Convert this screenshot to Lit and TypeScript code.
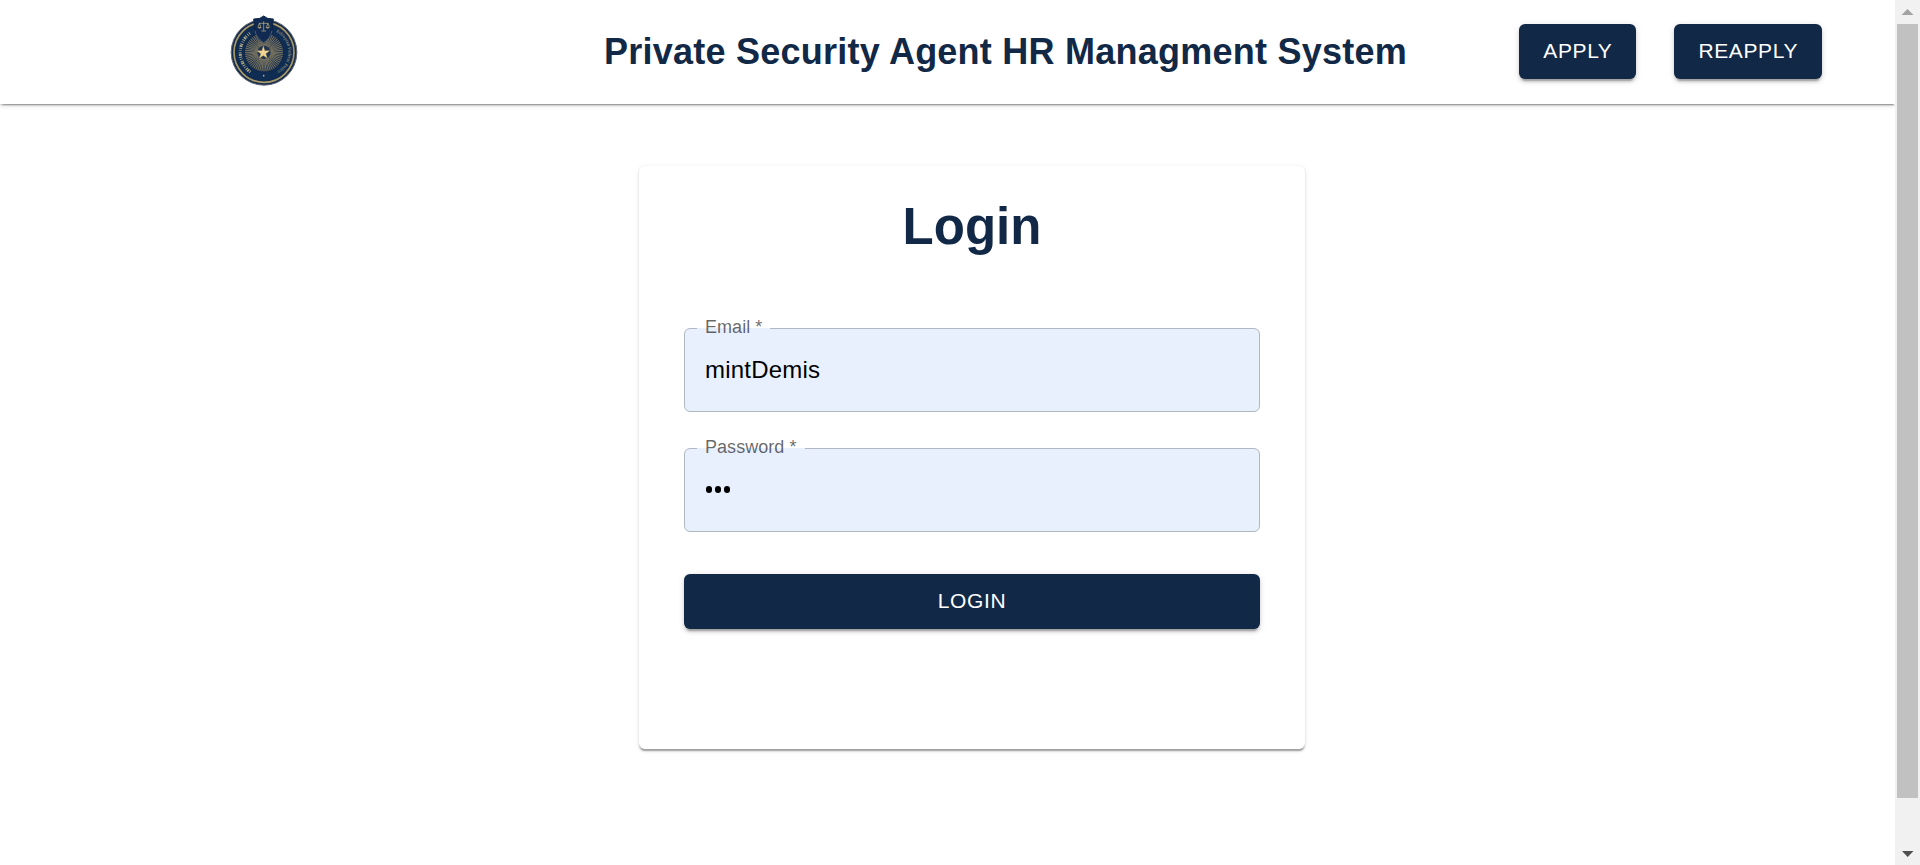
import { LitElement, html, css, svg } from "lit";
import { customElement, property } from "lit/decorators.js";

@customElement("police-crest")
class PoliceCrest extends LitElement {
  static styles = css`
    :host { display: block; width: 70px; height: 72px; }
    svg { display: block; width: 70px; height: 72px; }
    text { font-family: "Liberation Serif", serif; font-size: 14px; fill: #b9ad85; letter-spacing: 0.2px; }
  `;

  private rays() {
    return Array.from({ length: 56 }, (_, i) => {
      const a = (i / 56) * Math.PI * 2;
      const at = (r: number) => `${132 + Math.cos(a) * r} ${127 + Math.sin(a) * r}`;
      return svg`<path d="M${at(20)}L${at(57)}" stroke="#8f8462" stroke-width="2.4"/>`;
    });
  }

  render() {
    return html`<svg viewBox="30 15 210 216" fill="none">
      <circle cx="132" cy="127" r="98.5" fill="#152b4b" stroke="#5f6575" stroke-width="3"/>
      <circle cx="132" cy="127" r="90" stroke="#a89a6b" stroke-width="5"/>
      <circle cx="132" cy="127" r="84" fill="#0f2c52"/>
      <circle cx="132" cy="127" r="59" fill="#203450" stroke="#142743" stroke-width="3"/>
      ${this.rays()}
      <path d="M91 186A72 72 0 0 1 92 68" stroke="#b9ad85" stroke-width="9" stroke-dasharray="2.5 3 5 2 3 5 2 4"/>
      <path id="arc" d="M168 66A67 67 0 0 1 158 190"/>
      <text><textPath href="#arc" textLength="145">Ethiopian Federal Police</textPath></text>
      <circle cx="131" cy="197" r="2.5" fill="#c2b27d"/>
      <path d="M101 27Q121 28 131 18Q141 28 160 27L156 62Q152 84 131 98Q109 84 105 62Z" fill="#102a52" stroke="#0d2345" stroke-width="3"/>
      <path d="M105 62Q109 84 131 98Q152 84 156 62" stroke="#8791a3" stroke-width="1.5"/>
      <path d="M131 34V62M124 63H138M117 40H145M118 40L114 52M118 40L123 52M144 40L139 52M144 40L148 52" stroke="#c9b87d" stroke-width="2"/>
      <path d="M113 52H125Q119 59 113 52ZM137 52H149Q143 59 137 52Z" fill="#c9b87d"/>
      <path d="M130 108L134.500 122L149 122L137.500 131L142 145L130 136.500L118 145L122.500 131L111 122L125.500 122Z" fill="#efd391" stroke="#b59b62" stroke-width="1"/>
    </svg>`;
  }
}

@customElement("outlined-field")
class OutlinedField extends LitElement {
  @property() label = "";
  @property() value = "";
  @property() type = "text";

  static styles = css`
    :host { display: block; height: 84px; position: relative; }
    .well {
      box-sizing: border-box; height: 84px; padding: 0 21px; border-radius: 6px;
      background: #e8f0fe; display: flex; align-items: center;
      font-size: 24px; line-height: 34px; letter-spacing: 0.2px; color: #000;
    }
    .dots { display: flex; gap: 2.6px; padding: 0 0 1px 1px; }
    .dot { width: 6.2px; height: 6.2px; border-radius: 50%; background: #000; }
    .outline {
      position: absolute; inset: -8px 0 0 0; margin: 0; padding: 0 12px; min-width: 0;
      border: 1px solid rgba(0, 0, 0, 0.23); border-radius: 6px;
    }
    .notch { padding: 0; height: 17px; font-size: 18px; line-height: 17px; visibility: hidden; }
    .notch-text { padding: 0 8px; letter-spacing: 0.05px; }
    .label {
      position: absolute; left: 21px; top: -13px;
      font-size: 18px; line-height: 24px; letter-spacing: 0.05px; color: rgba(0, 0, 0, 0.6);
    }
  `;

  render() {
    return html`
      <div class="well">${this.type === "password"
        ? html`<span class="dots">${[...this.value].map(() => html`<span class="dot"></span>`)}</span>`
        : this.value}</div>
      <fieldset class="outline"><legend class="notch"><span class="notch-text">${this.label} *</span></legend></fieldset>
      <label class="label">${this.label} *</label>
    `;
  }
}

@customElement("app-root")
class AppRoot extends LitElement {
  static styles = css`
    :host {
      display: flex; height: 865px; overflow: hidden; background: #fff;
      font-family: "Liberation Sans", Arial, sans-serif; color: #112846;
    }
    .page { flex: 1; min-width: 0; overflow: hidden; }
    .bar {
      box-sizing: border-box; height: 104px; display: flex; align-items: center;
      padding: 0 73px 0 230px; background: #fff;
      box-shadow: 0 3px 1.5px -1.5px rgba(0,0,0,.2), 0 1.5px 1.5px rgba(0,0,0,.14), 0 1.5px 4.5px rgba(0,0,0,.12);
    }
    .crest { margin-bottom: 2px; }
    .title {
      margin: 0 0 0 304px; font-size: 36px; line-height: 48px; font-weight: 700;
      letter-spacing: 0.24px; white-space: nowrap;
    }
    .actions { display: flex; gap: 38px; margin: 0 0 1px auto; }
    .button {
      box-sizing: border-box; height: 55px; padding: 0 24px 2px; border: 0; border-radius: 6px;
      background: #112846; color: #fff; font: 400 21px/36px "Liberation Sans", Arial, sans-serif;
      letter-spacing: 0.6px;
      box-shadow: 0 4.5px 1.5px -3px rgba(0,0,0,.2), 0 3px 3px rgba(0,0,0,.14), 0 1.5px 7.5px rgba(0,0,0,.12);
    }
    .card {
      box-sizing: border-box; width: 666px; height: 583px; margin: 62px 0 0 639px; padding: 29px 45px;
      display: flex; flex-direction: column; background: #fff; border-radius: 6px;
      box-shadow: 0 3px 1.5px -1.5px rgba(0,0,0,.2), 0 1.5px 1.5px rgba(0,0,0,.14), 0 1.5px 4.5px rgba(0,0,0,.12);
    }
    .heading {
      margin: 0 0 70px; font-size: 51px; line-height: 63px; font-weight: 700;
      text-align: center;
    }
    .fields { display: flex; flex-direction: column; gap: 36px; margin-bottom: 42px; }
    .track {
      width: 25px; box-sizing: border-box; background: #f1f1f1;
      display: flex; flex-direction: column; align-items: center;
    }
    .thumb { width: 21px; height: 774px; background: #c1c1c1; }
    .arrow { display: block; width: 25px; height: 24px; }
    .spacer { flex: 1; }
  `;

  render() {
    return html`
      <main class="page">
        <header class="bar">
          <police-crest class="crest"></police-crest>
          <h1 class="title">Private Security Agent HR Managment System</h1>
          <nav class="actions">
            <button class="button">APPLY</button>
            <button class="button">REAPPLY</button>
          </nav>
        </header>
        <section class="card">
          <h2 class="heading">Login</h2>
          <div class="fields">
            <outlined-field label="Email" value="mintDemis"></outlined-field>
            <outlined-field label="Password" type="password" value="***"></outlined-field>
          </div>
          <button class="button">LOGIN</button>
        </section>
      </main>
      <aside class="track">
        <svg class="arrow" viewBox="0 0 25 24"><path d="M6.500 15L12.500 9L18.500 15Z" fill="#a3a3a3"/></svg>
        <div class="thumb"></div>
        <div class="spacer"></div>
        <svg class="arrow" viewBox="0 0 25 24"><path d="M7 10H18.500L12.700 16Z" fill="#505050"/></svg>
      </aside>
    `;
  }
}
